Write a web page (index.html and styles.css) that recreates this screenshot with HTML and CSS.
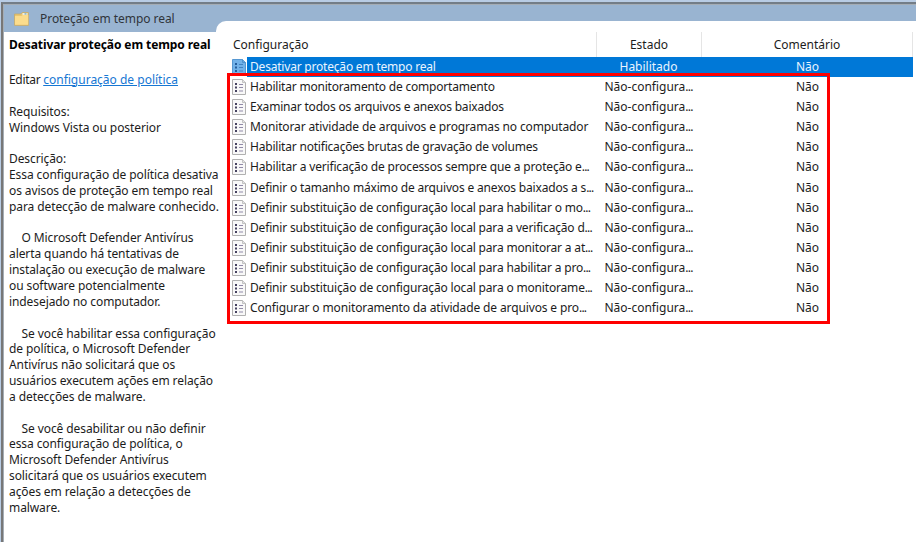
FILE: index.html
```
<!DOCTYPE html>
<html lang="pt-BR">
<head>
<meta charset="utf-8">
<title>Proteção em tempo real</title>
<link rel="stylesheet" href="styles.css">
</head>
<body>
<svg class="defs" width="0" height="0" aria-hidden="true">
  <symbol id="doc" viewBox="0 0 14 16">
    <path d="M.5.5h10l3 3v12H.5z" fill="#f8f8f8" stroke="#b0b0b0"/>
    <path d="M10.5.5v3h3" fill="#e4e4e4" stroke="#b8b8b8" stroke-width=".8"/>
    <path d="M3 4h2v2H3zM3 7.5h2v2H3zM3 11h2v2H3z" fill="#45415f"/>
    <path d="M7 5.5h4M7 8.5h4M7 12h4" stroke="#918ba8"/>
  </symbol>
  <symbol id="docsel" viewBox="0 0 14 16">
    <path d="M.5.5h10l3 3v12H.5z" fill="#72b2e9" stroke="#5698d2"/>
    <path d="M10.5.5v3h3" fill="#65a5dd" stroke="#468ac6" stroke-width=".8"/>
    <path d="M3 4h2v2H3zM3 7.5h2v2H3zM3 11h2v2H3z" fill="#225d9d"/>
    <path d="M7 5.5h4M7 8.5h4M7 12h4" stroke="#4283c2"/>
  </symbol>
</svg>
<div class="window">
  <header class="bar">
    <svg class="folder" width="16" height="14" viewBox="0 0 16 14">
      <path d="M.6 2h6.2l1.4-1.4h6.2V13.4H.6z" fill="#e9c672" stroke="#c9a95f" stroke-width=".7"/>
      <path d="M8.5 1.1h5v1.7h-5z" fill="#f4f4ec"/><path d="M10.5 1.3h2v1.2h-2z" fill="#67a6c9"/>
      <path d="M1 4h6.5l1.3-1h5.4v9.8H1z" fill="#fbdc8c"/>
    </svg>
    <span class="bar-title">Proteção em tempo real</span>
  </header>
  <main class="content">
    <aside class="side">
      <h1>Desativar proteção em tempo real</h1>
      <p class="edit"><span>Editar </span><a href="#">configuração de política</a></p>
      <p>Requisitos:<br>Windows Vista ou posterior</p>
      <p>Descrição:<br>Essa configuração de política desativa<br>os avisos de proteção em tempo real<br>para detecção de malware conhecido.</p>
      <p class="indent">O Microsoft Defender Antivírus<br>alerta quando há tentativas de<br>instalação ou execução de malware<br>ou software potencialmente<br>indesejado no computador.</p>
      <p class="indent">Se você habilitar essa configuração<br>de política, o Microsoft Defender<br>Antivírus não solicitará que os<br>usuários executem ações em relação<br>a detecções de malware.</p>
      <p class="indent">Se você desabilitar ou não definir<br>essa configuração de política, o<br>Microsoft Defender Antivírus<br>solicitará que os usuários executem<br>ações em relação a detecções de<br>malware.</p>
    </aside>
    <section class="list">
      <div class="head"><span>Configuração</span><span>Estado</span><span>Comentário</span></div>
      <div class="row selected"><svg><use href="#docsel"/></svg><span class="name">Desativar proteção em tempo real</span><span class="state">Habilitado</span><span class="comment">Não</span></div>
      <div class="rows">
        <div class="row"><svg><use href="#doc"/></svg><span class="name">Habilitar monitoramento de comportamento</span><span class="state">Não-configura<i>...</i></span><span class="comment">Não</span></div>
        <div class="row"><svg><use href="#doc"/></svg><span class="name">Examinar todos os arquivos e anexos baixados</span><span class="state">Não-configura<i>...</i></span><span class="comment">Não</span></div>
        <div class="row"><svg><use href="#doc"/></svg><span class="name long">Monitorar atividade de arquivos e programas no computador</span><span class="state">Não-configura<i>...</i></span><span class="comment">Não</span></div>
        <div class="row"><svg><use href="#doc"/></svg><span class="name">Habilitar notificações brutas de gravação de volumes</span><span class="state">Não-configura<i>...</i></span><span class="comment">Não</span></div>
        <div class="row"><svg><use href="#doc"/></svg><span class="name cut">Habilitar a verificação de processos sempre que a proteção e<i>...</i></span><span class="state">Não-configura<i>...</i></span><span class="comment">Não</span></div>
        <div class="row"><svg><use href="#doc"/></svg><span class="name cut">Definir o tamanho máximo de arquivos e anexos baixados a s<i>...</i></span><span class="state">Não-configura<i>...</i></span><span class="comment">Não</span></div>
        <div class="row"><svg><use href="#doc"/></svg><span class="name cut">Definir substituição de configuração local para habilitar o mo<i>...</i></span><span class="state">Não-configura<i>...</i></span><span class="comment">Não</span></div>
        <div class="row"><svg><use href="#doc"/></svg><span class="name cut">Definir substituição de configuração local para a verificação d<i>...</i></span><span class="state">Não-configura<i>...</i></span><span class="comment">Não</span></div>
        <div class="row"><svg><use href="#doc"/></svg><span class="name cut">Definir substituição de configuração local para monitorar a at<i>...</i></span><span class="state">Não-configura<i>...</i></span><span class="comment">Não</span></div>
        <div class="row"><svg><use href="#doc"/></svg><span class="name cut">Definir substituição de configuração local para habilitar a pro<i>...</i></span><span class="state">Não-configura<i>...</i></span><span class="comment">Não</span></div>
        <div class="row"><svg><use href="#doc"/></svg><span class="name cut">Definir substituição de configuração local para o monitorame<i>...</i></span><span class="state">Não-configura<i>...</i></span><span class="comment">Não</span></div>
        <div class="row"><svg><use href="#doc"/></svg><span class="name long">Configurar o monitoramento da atividade de arquivos e pro<i>...</i></span><span class="state">Não-configura<i>...</i></span><span class="comment">Não</span></div>
        <div class="highlight"></div>
      </div>
    </section>
  </main>
</div>
</body>
</html>
```
FILE: styles.css
```
* { box-sizing: border-box; }
body {
  margin: 0; height: 542px; overflow: hidden; padding: 2px 0 0 1px;
  background: #b8cce4; color: #1c1c1c;
  font-family: "Noto Sans", "Open Sans", sans-serif; font-size: 12px;
}
.defs { display: block; width: 0; height: 0; position: absolute; }
.window {
  height: 540px; background: #fff;
  border-top: 2px solid #737d87; border-left: 2px solid #777;
  box-shadow: inset 1px 1px #a5adb5;
}
.bar {
  height: 27px; margin: 1px 0 0 1px; background: #99b4d1;
  display: flex; align-items: center; padding-left: 10px;
}
.folder { margin-right: 10px; }
.bar-title { color: #30353b; line-height: 16px; padding-top: 1px; letter-spacing: -.05px; }
.content { display: flex; height: 510px; }
.side {
  width: 213px; padding: 5px 0 0 6px; white-space: nowrap;
  line-height: 15.84px; letter-spacing: -.09px; position: relative; z-index: 1;
}
.side h1 { margin: 0 0 18.5px; font-size: 12px; line-height: 16px; color: #000; }
.side p { margin: 0 0 15.84px; }
.side .edit { margin-bottom: 16.4px; }
.edit span { letter-spacing: -.3px; }
.edit a { letter-spacing: 0; }
.side .indent { text-indent: 12.5px; }
.side a { color: #1677d3; text-decoration: underline; }
.list { flex: 1; margin-top: -11px; background: #fff; border-top-left-radius: 10px; padding: 11px 3px 0 11px; }
.head { display: grid; grid-template-columns: 370px 105px 1fr; height: 25px; line-height: 26px; }
.head span { border-right: 1px solid #e5e5e5; text-align: center; }
.head span:first-child { text-align: left; padding-left: 6px; }
.row { display: grid; grid-template-columns: 20px 350px 105px 1fr; height: 20.08px; line-height: 20px; align-items: center; white-space: nowrap; }
.row svg { width: 14px; height: 16px; margin-left: 5px; display: block; }
.row span { height: 20px; }
.row i { font-style: normal; letter-spacing: -.8px; }
.name { padding-left: 3px; letter-spacing: -.2px; }
.long { letter-spacing: -.13px; }
.cut { letter-spacing: -.17px; }
.state, .comment { text-align: center; }
.state { padding-right: 2px; }
.selected span { background: #0078d7; color: #e9f4ff; }
.rows { position: relative; }
.highlight { position: absolute; left: 0; top: -4px; width: 603px; height: 251px; border: 3px solid #fe0000; }
```
